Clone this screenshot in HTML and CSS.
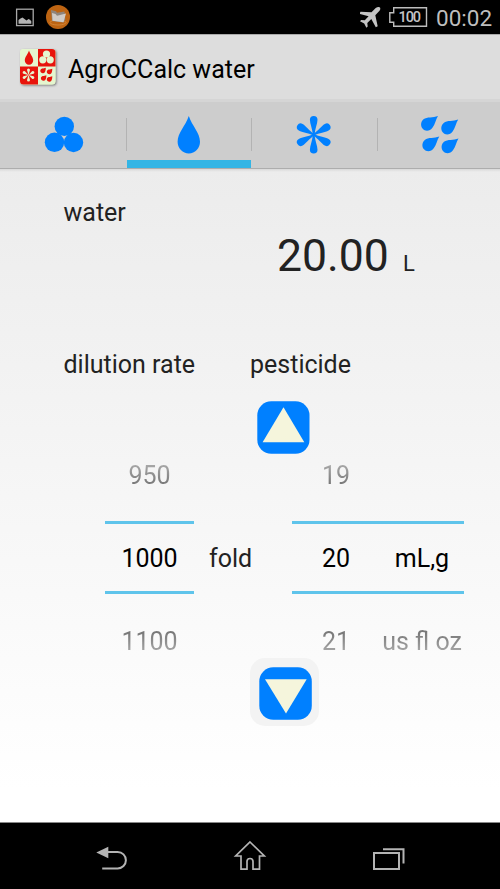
FILE: index.html
```html
<!DOCTYPE html>
<html lang="en">
<head>
<meta charset="utf-8">
<title>AgroCCalc water</title>
<link rel="stylesheet" href="styles.css">
</head>
<body>
<div class="screen">
  <header class="status">
    <svg class="status-left" width="80" height="34" viewBox="0 0 80 34">
      <rect x="16.6" y="9.2" width="16.6" height="16.4" fill="none" stroke="#a8a8a8" stroke-width="1.3"/>
      <path d="M18.5 23.8V20l2-1.5 2-1 2 1.500 2 1.500 2-1.500 1.500.8 1.300 1.500v2.500z" fill="#b4b4b4"/>
      <circle cx="58" cy="17" r="12" fill="#bd6412"/>
      <ellipse cx="58" cy="22.500" rx="8" ry="2.500" fill="none" stroke="#d58a3e" stroke-width=".8"/>
      <path d="M51 10l5 1.300 1 1.400 7.500-1.200.8 8-2 3-11.300-1.500z" fill="#8f857c"/>
      <path d="M52 13l3.500 1 1.500 1.800 9-2.300-2.500 8.700-11-1.500z" fill="#d0cbc6"/>
    </svg>
    <svg class="status-right" width="72" height="34" viewBox="0 0 72 34">
      <path d="M23.500 7.200c1.200.5 1 2.400 0 3.500l-4.200 4.600 2.400 11-1.900 1-4.500-8.200-4 3.800.4 3.600-1.300 1.200-2.200-4.200-4.200-2.200 1.200-1.300 3.600.3 3.800-4L3.500 13.800l1-2 11 .5 4.200-4.200c1.200-1 2.800-1.500 3.800-.9z" transform="translate(-4 0)" fill="#c4c4c4"/>
      <path d="M33.700 7.700H66.500V26.300H33.700V22.300H29.800V12.700H33.700Z" fill="none" stroke="#bdbdbd" stroke-width="1.400"/>
      <text x="38.500" y="22.300" class="battery-text" textLength="22.500">100</text>
    </svg>
    <span class="clock">00:02</span>
  </header>

  <div class="titlebar">
    <svg class="logo" width="42" height="42" viewBox="0 0 42 42">
      <defs><clipPath id="tile"><rect x="2" y="2" width="35.500" height="35.500" rx="3.500"/></clipPath></defs>
      <rect class="logo-shadow" x="2" y="2" width="35.500" height="35.500" rx="3.500" fill="#e8f8d0"/>
      <g clip-path="url(#tile)">
        <rect x="2" y="2" width="36" height="36" fill="#e5f6cf"/>
        <path d="M20 2h18v17.500H20zM2 19.500h18V38H2z" fill="#e8140c"/>
      </g>
      <path d="M11 3.500c1.300 4 4.200 6.500 4.200 10a4.200 4.200 0 0 1-8.400 0c0-3.500 2.900-6 4.200-10z" fill="#e8140c"/>
      <g fill="#e5f6cf"><circle cx="28.500" cy="7" r="3.600"/><circle cx="24.800" cy="12.800" r="3.600"/><circle cx="32.200" cy="12.800" r="3.600"/></g>
      <g fill="#e5f6cf" transform="translate(10.500 28)">
        <path id="ray" d="M0 0L-1.500-5a1.500 1.500 0 0 1 3 0z"/>
        <use href="#ray" transform="rotate(60)"/><use href="#ray" transform="rotate(120)"/><use href="#ray" transform="rotate(180)"/><use href="#ray" transform="rotate(240)"/><use href="#ray" transform="rotate(300)"/>
      </g>
      <g fill="#e8140c">
        <path id="sd" d="M27.800 20.800c0 3-.7 5.100-2.500 5.500a2.600 2.600 0 0 1-3-3c.4-1.900 3.200-1.700 5.500-2.500z"/>
        <use href="#sd" x="6.500" y="1"/><use href="#sd" x=".6" y="7.500"/><use href="#sd" x="6.500" y="8.500"/>
      </g>
    </svg>
    <h1 class="title">AgroCCalc water</h1>
  </div>

  <nav class="tabs">
    <div class="tab">
      <svg width="124" height="69" viewBox="0 0 124 69"><g fill="#0080ff"><circle cx="64.300" cy="27.400" r="9.700"/><circle cx="54.500" cy="43.300" r="9.700"/><circle cx="73.500" cy="43.500" r="9.700"/></g></svg>
    </div>
    <div class="tab tab-active">
      <svg width="124" height="69" viewBox="0 0 124 69"><path d="M62.800 17C66 27 74 33.500 74 42.800a11.200 11.600 0 0 1-22.400 0C51.600 33.500 59.600 27 62.800 17z" fill="#0080ff"/></svg>
    </div>
    <div class="tab">
      <svg width="124" height="69" viewBox="0 0 124 69"><g fill="#0080ff" transform="translate(62.700 35.700)">
        <path id="petal" d="M-.9 0C-1.200-6-3.800-11-3.800-15a3.800 3.800 0 0 1 7.600 0C3.800-11 1.200-6 .9 0z"/>
        <use href="#petal" transform="rotate(60)"/><use href="#petal" transform="rotate(120)"/><use href="#petal" transform="rotate(180)"/><use href="#petal" transform="rotate(240)"/><use href="#petal" transform="rotate(300)"/>
      </g></svg>
    </div>
    <div class="tab">
      <svg width="122" height="69" viewBox="0 0 122 69"><g fill="#0080ff">
        <path id="drop" d="M61 16.900C58.800 20.500 58 25.200 55.600 28.500C52.800 32.300 48.300 32.800 45.500 29.500C43.300 26.800 43.700 22.700 46.500 20.300C50 17.500 56 18.900 61 16.900z"/>
        <use href="#drop" x="20.200" y="3.700"/><use href="#drop" x="1.300" y="20.600"/><use href="#drop" x="20.500" y="22.500"/>
      </g></svg>
    </div>
  </nav>

  <main class="content">
    <div class="label water-label">water</div>
    <div class="amount"><span class="amount-value">20.00</span><span class="amount-unit">L</span></div>
    <div class="labels">
      <span class="label rate-label">dilution rate</span>
      <span class="label pesticide-label">pesticide</span>
    </div>
    <div class="step step-up">
      <svg width="53" height="53" viewBox="0 0 53 53"><rect x=".3" y=".3" width="52.200" height="52.500" rx="14" fill="#0080ff"/><path d="M26.500 6.300L47.300 41.200H5.600z" fill="#f5f5dc"/></svg>
    </div>
    <div class="pickers">
      <div class="picker picker-rate">
        <div class="faded above">950</div>
        <div class="selected">1000</div>
        <div class="faded below">1100</div>
      </div>
      <div class="fold">fold</div>
      <div class="picker picker-dose">
        <div class="faded above"><span>19</span><span></span></div>
        <div class="selected"><span>20</span><span>mL,g</span></div>
        <div class="faded below"><span>21</span><span>us fl oz</span></div>
      </div>
    </div>
    <div class="step step-down">
      <svg width="53" height="53" viewBox="0 0 53 53"><rect x=".3" y=".3" width="52.500" height="52.500" rx="14" fill="#0080ff"/><path d="M6 12.200H47.700L27 46.500z" fill="#f5f5dc"/></svg>
    </div>
  </main>

  <footer class="navbar">
    <svg width="34" height="36" viewBox="0 0 34 36"><path d="M.3 19.500l12-5.700v11.400z" fill="#b4b4b4"/><path d="M11 19.200h11.200a8.200 8.200 0 0 1 0 16.400H6.700" transform="translate(-.5 -.2)" fill="none" stroke="#b4b4b4" stroke-width="2"/></svg>
    <svg width="34" height="36" viewBox="0 0 34 36"><path d="M16 9L30.300 23H25.500V36.200H19V28.500a3 3 0 0 0-6 0V36.200H7V23H1.700z" fill="none" stroke="#b4b4b4" stroke-width="1.700"/></svg>
    <svg width="34" height="36" viewBox="0 0 34 36"><path d="M3 20H28V36H3zM12 16.300H32.500V30.500" fill="none" stroke="#b4b4b4" stroke-width="2"/></svg>
  </footer>
</div>
</body>
</html>
```

FILE: styles.css
```css
* { box-sizing: border-box; }

body {
  margin: 0;
  font-family: Roboto, "Noto Sans", sans-serif;
  font-size: 25px;
  line-height: 30px;
  color: #222;
}

svg { display: block; flex: none; }

.screen {
  width: 500px;
  height: 889px;
  display: flex;
  flex-direction: column;
  overflow: hidden;
}

.status {
  height: 34px;
  display: flex;
  background: #000;
}

.status-right { margin-left: 280px; }

.battery-text {
  fill: #c4c4c4;
  font-size: 14.5px;
  font-weight: 500;
}

.clock {
  margin-left: 4px;
  font-size: 22.5px;
  line-height: 37px;
  color: #bebebe;
  white-space: nowrap;
}

.titlebar {
  height: 65px;
  padding: 12px 0 0 18px;
  display: flex;
  align-items: flex-start;
  background: #ddd;
  border-top: 1px solid #aaa;
}

.logo-shadow { filter: drop-shadow(1.5px 1.5px 1px #777); }

.title {
  margin: 8px 0 0 8px;
  font-size: 25px;
  font-weight: 400;
  color: #000;
}

.tabs {
  height: 70px;
  display: grid;
  grid-template-columns: 126px 125px 126px 123px;
  background:
    linear-gradient(#d5d5d5, #d5d5d5) 0 0 / 100% 3px no-repeat,
    #cdcdcd;
  border-bottom: 1px solid #adadad;
}

.tab {
  background: linear-gradient(#b3b3b3, #b3b3b3) 0 19px / 1px 33px no-repeat;
}

.tab:first-child { background: none; }

.tab-active {
  background:
    linear-gradient(#b3b3b3, #b3b3b3) 0 19px / 1px 33px no-repeat,
    linear-gradient(#33b5e5, #33b5e5) 1px 61px / 124px 8px no-repeat;
}

.content {
  height: 653px;
  padding-top: 29px;
  background:
    linear-gradient(#d9d9d9, transparent) 0 0 / 100% 3px no-repeat,
    linear-gradient(#ececec, #fff 95%);
}

.water-label { padding-left: 63.5px; }

.amount {
  height: 122px;
  padding: 1px 0 0 277px;
  display: flex;
  align-items: baseline;
  line-height: 54px;
}

.amount-value { width: 126px; font-size: 44.5px; }

.amount-unit { font-size: 22px; }

.labels {
  height: 51px;
  padding-left: 63.5px;
  display: flex;
}

.rate-label { width: 186.5px; }

.step-up { padding-left: 257px; }

.pickers {
  height: 204px;
  padding-left: 105px;
  display: flex;
}

.picker { text-align: center; }

.picker-rate { width: 89px; }

.picker-dose { width: 172px; margin-left: 25px; }

.picker-dose > div {
  display: grid;
  grid-template-columns: 88px 84px;
}

.faded {
  color: transparent;
  background-clip: text;
  -webkit-background-clip: text;
}

.above {
  height: 67px;
  padding-top: 7px;
  background-image: linear-gradient(#aaa 10px, #747474 32px);
}

.below {
  height: 64px;
  padding-top: 33px;
  background-image: linear-gradient(#777 38px, #adadad 60px);
}

.selected {
  height: 73px;
  padding-top: 19px;
  border-top: 3px solid #5fc4eb;
  border-bottom: 3px solid #5fc4eb;
  line-height: 31px;
  color: #000;
}

.fold {
  width: 73px;
  padding: 90px 0 0 15px;
}

.step-down {
  width: 69px;
  height: 68px;
  margin-left: 250px;
  padding: 9px 0 0 9px;
  border-radius: 15px;
  background: #f3f3f3;
}

.navbar {
  height: 67px;
  padding: 11px 95px 0 96px;
  display: flex;
  justify-content: space-between;
  background: #000;
  border-top: 1px solid #888;
}

.navbar svg { margin-top: -1px; overflow: visible; }
```
